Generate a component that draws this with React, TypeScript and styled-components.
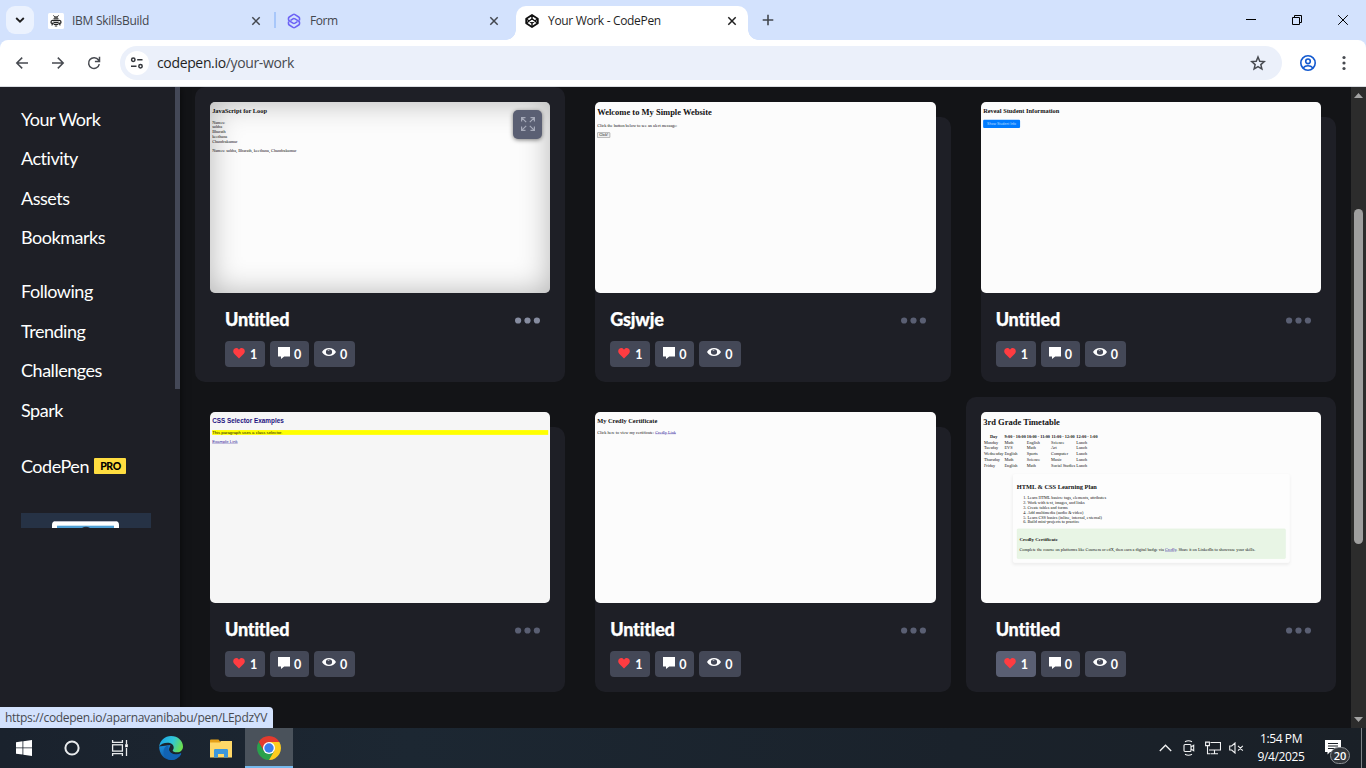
import React from "react";
import styled, { createGlobalStyle, css } from "styled-components";

const GlobalStyle = createGlobalStyle`
  html, body { margin: 0; padding: 0; background: #131417; }
  *, *::before, *::after { box-sizing: border-box; }
  svg { display: block; flex: none; }
`;

const uiFont = `"Open Sans", "Noto Sans", sans-serif`;
const siteFont = `Lato, "Liberation Sans", sans-serif`;

const Screen = styled.div`
  width: 1366px;
  height: 768px;
  overflow: hidden;
  display: flex;
  flex-direction: column;
  font-family: ${uiFont};
`;

/* ---------- browser frame ---------- */

const TabStrip = styled.div`
  height: 40px;
  flex: none;
  display: flex;
  align-items: stretch;
  background: #d3e2fd;
`;

const TabSearch = styled.div`
  width: 28px;
  height: 28px;
  margin: 6px 6px 0;
  border-radius: 9px;
  background: #ebf2fe;
  display: flex;
  align-items: center;
  justify-content: center;
`;

const Tab = styled.div<{ $width: number; $left: number; $right: number; $active?: boolean }>`
  position: relative;
  width: ${(p) => p.$width}px;
  margin-top: 6px;
  padding: 0 ${(p) => p.$right}px 5px ${(p) => p.$left}px;
  display: flex;
  align-items: center;
  gap: 8px;
  font-size: 12px;
  color: ${(p) => (p.$active ? "#1f1f1f" : "#43474e")};
  ${(p) =>
    p.$active &&
    css`
      background: #fff;
      border-radius: 10px 10px 0 0;
      &::before,
      &::after {
        content: "";
        position: absolute;
        bottom: 0;
        width: 10px;
        height: 10px;
      }
      &::before {
        left: -10px;
        background: radial-gradient(circle at 0 0, transparent 9.5px, #fff 10px);
      }
      &::after {
        right: -10px;
        background: radial-gradient(circle at 100% 0, transparent 9.5px, #fff 10px);
      }
    `}
`;

const TabTitle = styled.span<{ $spacing: number }>`
  flex: 1;
  white-space: nowrap;
  line-height: 16px;
  letter-spacing: ${(p) => p.$spacing}px;
`;

const TabDivider = styled.div`
  width: 2px;
  height: 16px;
  margin-top: 12px;
  background: #a8c7fa;
`;

const NewTab = styled.div`
  width: 40px;
  display: flex;
  align-items: center;
  justify-content: center;
`;

const WindowControls = styled.div`
  margin-left: auto;
  display: flex;
  align-items: center;
`;

const WindowControl = styled.div`
  width: 46px;
  display: flex;
  justify-content: center;
`;

const ToolbarBack = styled.div`
  flex: none;
  background: #d3e2fd;
`;

const Toolbar = styled.div`
  height: 47px;
  padding: 0 4px 1px;
  display: flex;
  align-items: center;
  background: #fff;
  border-radius: 8px 8px 0 0;
  border-bottom: 1px solid #dadde2;
`;

const ToolButton = styled.div`
  width: 36px;
  display: flex;
  justify-content: center;
`;

const AddressBar = styled.div`
  flex: 1;
  height: 34px;
  margin-left: 8px;
  margin-right: 8px;
  padding: 0 16px 0 5px;
  display: flex;
  align-items: center;
  gap: 8px;
  border-radius: 17px;
  background: #ebf0fa;
`;

const SiteInfo = styled.div`
  width: 24px;
  height: 24px;
  border-radius: 50%;
  background: #fff;
  display: flex;
  align-items: center;
  justify-content: center;
`;

const Address = styled.div`
  flex: 1;
  font-size: 14px;
  line-height: 20px;
  letter-spacing: -0.35px;
  color: #474a50;
  b {
    font-weight: 400;
    color: #1f1f1f;
  }
`;

/* ---------- page ---------- */

const Page = styled.div`
  position: relative;
  flex: 1;
  min-height: 0;
  display: flex;
  overflow: hidden;
  background: #131417;
`;

const Sidebar = styled.aside`
  width: 180px;
  flex: none;
  display: flex;
  justify-content: space-between;
  background: #1e1f26;
  box-shadow: 0 0 8px rgba(0, 0, 0, 0.6);
`;

const SidebarScroll = styled.div`
  height: 441px;
  padding: 12px 0 0 21px;
  overflow: hidden;
`;

const SidebarThumb = styled.div`
  width: 5px;
  height: 302px;
  background: #444857;
`;

const NavGroup = styled.nav<{ $gap: number }>`
  display: flex;
  flex-direction: column;
  margin-bottom: ${(p) => p.$gap}px;
`;

const NavLink = styled.a`
  height: 39.5px;
  font: 400 18px/40px ${siteFont};
  letter-spacing: -0.47px;
  color: #fff;
  display: flex;
  align-items: center;
  gap: 5.5px;
`;

const ProBadge = styled.span`
  width: 32px;
  height: 16px;
  margin-top: 1px;
  border-radius: 1px;
  background: #ffdd40;
  color: #000;
  font: 900 10.5px/16px ${siteFont};
  letter-spacing: -0.4px;
  text-align: center;
`;

const Promo = styled.div`
  width: 130px;
  height: 60px;
  background: #263245;
`;

const Grid = styled.main`
  flex: 1;
  min-width: 0;
  padding: 0 15px;
  display: grid;
  grid-template-columns: repeat(3, minmax(0, 1fr));
  grid-auto-rows: 295px;
  gap: 15px;
  align-content: start;
`;

const Card = styled.article<{ $raised?: boolean }>`
  position: relative;
  padding: 15px;
  font-family: ${siteFont};
  &::before {
    content: "";
    position: absolute;
    inset: ${(p) => (p.$raised ? "0" : "30px 0 0 15px")};
    border-radius: 10px;
    background: #1e1f26;
  }
`;

const Thumb = styled.div<{ $bg: string; $shaded?: boolean }>`
  position: relative;
  height: 191px;
  border-radius: 5px;
  overflow: hidden;
  background: ${(p) => p.$bg};
  ${(p) =>
    p.$shaded &&
    css`
      &::after {
        content: "";
        position: absolute;
        inset: 0;
        border-radius: 5px;
        box-shadow: inset 0 0 30px rgba(0, 0, 0, 0.29);
      }
    `}
`;

const MiniPage = styled.div<{ $font: string }>`
  display: flow-root;
  width: 1280px;
  height: 718px;
  padding: 0 8px;
  transform: scale(0.2659);
  transform-origin: 0 0;
  font: 16px ${(p) => p.$font};
  color: #111;
  a {
    color: #3a2aa0;
    text-decoration: underline;
  }
`;

const PlainButton = styled.button`
  width: 49px;
  height: 21px;
  padding: 0;
  font: 13.33px "Liberation Sans", sans-serif;
  border: 2px solid #808080;
  border-radius: 3px;
  background: #efefef;
  color: #000;
`;

const BlueButton = styled.button`
  padding: 8px 15px;
  font: 13.33px "Liberation Sans", sans-serif;
  border: 0;
  border-radius: 4px;
  background: #007bff;
  color: #b9dcff;
`;

const NavyHeading = styled.h2`
  color: #1d1280;
`;

const Marked = styled.p`
  background: #ff0;
`;

const PlanBox = styled.div`
  width: 1041px;
  margin: 19px auto 0;
  padding: 15px;
  background: #fdfdfd;
  border-radius: 8px;
  box-shadow: 0 7px 12px rgba(0, 0, 0, 0.06);
  display: flow-root;
`;

const GreenBox = styled.div`
  padding: 9px;
  display: flow-root;
  background: #e8f5e5;
  border: 1px solid #dcf0da;
  border-radius: 5px;
`;

const ExpandButton = styled.div`
  position: absolute;
  z-index: 1;
  top: 8px;
  right: 8.5px;
  width: 28.5px;
  height: 28.5px;
  border-radius: 5px;
  background: #5a5f73;
  box-shadow: 0 1px 4px rgba(0, 0, 0, 0.5);
  display: flex;
  align-items: center;
  justify-content: center;
`;

const Meta = styled.div`
  position: relative;
  padding: 15px;
`;

const TitleRow = styled.div`
  height: 22px;
  display: flex;
  justify-content: space-between;
  align-items: flex-start;
`;

const PenTitle = styled.h3`
  margin: 0;
  font: 900 18px/22px ${siteFont};
  letter-spacing: -0.2px;
  -webkit-text-stroke: 0.25px #fff;
  color: #fff;
`;

const DotsBox = styled.div<{ $bright?: boolean }>`
  margin: 9px -5px 0 0;
  color: ${(p) => (p.$bright ? "#868ca0" : "#5a5f73")};
`;

const Stats = styled.div`
  display: flex;
  gap: 5px;
  margin-top: 11px;
`;

const Stat = styled.div<{ $width: number; $gap: number; $lift?: number; $hover?: boolean }>`
  width: ${(p) => p.$width}px;
  height: 26px;
  padding-left: 8px;
  display: flex;
  align-items: center;
  gap: ${(p) => p.$gap}px;
  border-radius: 4px;
  background: ${(p) => (p.$hover ? "#5a5f73" : "#444857")};
  color: #fff;
  font: 700 12.5px/26px ${siteFont};
  svg {
    margin-bottom: ${(p) => p.$lift ?? 2}px;
  }
`;

const StatCount = styled.span`
  padding-top: 1px;
`;

const ScrollTrack = styled.div`
  width: 15px;
  flex: none;
  padding: 6px 3px;
  display: flex;
  flex-direction: column;
  align-items: center;
  background: #2c2c2c;
`;

const ScrollThumb = styled.div`
  width: 9px;
  height: 335px;
  margin-top: 111px;
  margin-bottom: auto;
  border-radius: 5px;
  background: #9f9f9f;
`;

const StatusBubble = styled.div`
  position: absolute;
  left: 0;
  bottom: 0;
  width: 273px;
  height: 21px;
  padding-left: 5px;
  border-radius: 0 4px 0 0;
  background: #d3e2fd;
  color: #474a50;
  font-size: 12px;
  line-height: 21px;
  letter-spacing: -0.31px;
  white-space: nowrap;
`;

/* ---------- taskbar ---------- */

const Taskbar = styled.footer`
  height: 40px;
  flex: none;
  display: flex;
  background: linear-gradient(90deg, #1a222d, #1c2732 30%, #1a222b 70%, #1a2027);
`;

const TaskItem = styled.div<{ $active?: boolean }>`
  width: 48px;
  display: flex;
  align-items: center;
  justify-content: center;
  ${(p) =>
    p.$active &&
    css`
      background: #4a525b;
      box-shadow: inset 0 -2px 0 #76b9ed;
    `}
`;

const TaskGroup = styled.div<{ $gap: number }>`
  display: flex;
  margin-right: ${(p) => p.$gap}px;
`;

const Tray = styled.div`
  margin-left: auto;
  display: flex;
  align-items: center;
`;

const TrayIcon = styled.div<{ $width: number }>`
  width: ${(p) => p.$width}px;
  display: flex;
  justify-content: center;
`;

const Clock = styled.div`
  width: 68px;
  text-align: center;
  color: #fff;
  font-size: 12px;
  line-height: 18px;
  letter-spacing: -0.4px;
`;

const Notifications = styled.div`
  position: relative;
  width: 46px;
  height: 40px;
  padding: 12px 0 0 10px;
`;

const NoticeCount = styled.span`
  position: absolute;
  left: 15px;
  top: 19px;
  width: 20px;
  height: 17px;
  border: 1px solid #8c9095;
  border-radius: 9px;
  background: #33373c;
  color: #fff;
  font-size: 11px;
  font-weight: 600;
  line-height: 15px;
  text-align: center;
`;

const DesktopEdge = styled.div`
  width: 5px;
  height: 40px;
  border-left: 1px solid #7d8287;
`;

/* ---------- icons ---------- */

const CloseIcon = ({ color = "#43474e" }: { color?: string }) => (
  <svg width="10" height="10" viewBox="0 0 10 10" stroke={color} strokeWidth="1.5">
    <path d="M1.3 1.3l7.4 7.4M8.7 1.3L1.3 8.7" />
  </svg>
);

const BeeIcon = () => (
  <svg width="16" height="16" viewBox="0 0 16 16">
    <rect width="16" height="16" rx="1.500" fill="#fff" />
    <g fill="none" stroke="#222">
      <path d="M5.300 2.500l1.500 1.200M10.700 2.500L9.200 3.700" strokeWidth="1" />
      <path d="M6 8C4.800 6.800 3 7.600 3 9.200c0 1.300 1.600 1.500 3 .6M10 8c1.200-1.200 3-.4 3 1.200 0 1.300-1.600 1.500-3 .6" strokeWidth="1.200" />
      <path d="M5.500 11.200H4v1.300M10.500 11.200H12v1.300" strokeWidth="1" />
      <path d="M5.500 5.900h5M6 7.700h4M6 9.500h4M6 11.300h4M6.800 13h2.400" strokeWidth="1.200" />
    </g>
    <path d="M6 4.800Q6 3.200 8 3.200t2 1.600z" fill="#222" />
  </svg>
);

const FormIcon = () => (
  <svg width="16" height="16" viewBox="0 0 16 16" fill="none" stroke="#6d63f5" strokeWidth="1.600" strokeLinejoin="round" strokeLinecap="round">
    <path d="M13.500 7V5.300c0-.6-.3-1-.8-1.300L9 1.600a1.900 1.900 0 0 0-2 0L3.300 4c-.5.300-.8.700-.8 1.300v1.200c0 .6.300 1 .8 1.300L7 10.200c.6.400 1.400.4 2 0l2-1.300" />
    <path d="M2.500 9v1.700c0 .6.300 1 .8 1.300L7 14.400c.6.400 1.400.4 2 0l3.700-2.400c.5-.3.800-.7.800-1.300V9.500c0-.6-.3-1-.8-1.300L9 5.800a1.900 1.900 0 0 0-2 0L5 7.100" />
  </svg>
);

const CodepenIcon = () => (
  <svg width="16" height="16" viewBox="0 0 16 16" fill="none" stroke="#111" strokeWidth="1.800" strokeLinejoin="round">
    <path d="M8 2l5.800 3.800v4.400L8 14l-5.800-3.800V5.800z" />
    <path d="M8 2v3.700M8 14v-3.700M2.200 5.800L8 10.300l5.800-4.500M2.200 10.200L8 5.700l5.800 4.500" strokeWidth="1.400" />
  </svg>
);

const BackIcon = ({ flip }: { flip?: boolean }) => (
  <svg width="14" height="14" viewBox="0 0 14 14" fill="none" stroke="#474a50" strokeWidth="1.500" transform={flip ? "scale(-1 1)" : undefined}>
    <path d="M13 7H2M7.200 1.600L1.800 7l5.400 5.400" />
  </svg>
);

const ReloadIcon = () => (
  <svg width="14" height="14" viewBox="0 0 14 14" fill="none" stroke="#474a50" strokeWidth="1.500">
    <path d="M12.300 8.200A5.400 5.400 0 1 1 11.500 4l.9 1M12.500.8v4.600H7.900" />
  </svg>
);

const TuneIcon = () => (
  <svg width="14" height="12" viewBox="0 0 14 12" fill="none" stroke="#33363b" strokeWidth="1.500">
    <circle cx="3.300" cy="2.800" r="1.700" />
    <path d="M7.200 2.800H12.500M1 9.200H6.500" />
    <circle cx="10.500" cy="9.200" r="1.700" />
  </svg>
);

const StarIcon = () => (
  <svg width="16" height="16" viewBox="0 0 16 16" fill="none" stroke="#474a50" strokeWidth="1.500">
    <path d="M8 2l1.750 4.200 4.550.4-3.450 3 1.050 4.450L8 11.700l-3.900 2.350 1.050-4.450-3.450-3 4.550-.4z" />
  </svg>
);

const ProfileIcon = () => (
  <svg width="18" height="18" viewBox="0 0 18 18" fill="none" stroke="#1259cf" strokeWidth="1.600">
    <circle cx="9" cy="9" r="7.200" />
    <circle cx="9" cy="7.300" r="2.300" />
    <path d="M4 14c1.400-1.500 3-2.200 5-2.200s3.600.7 5 2.200" />
  </svg>
);

const MoreIcon = () => (
  <svg width="4" height="16" viewBox="0 0 4 16" fill="#474a50">
    <circle cx="2" cy="2.500" r="1.600" />
    <circle cx="2" cy="8" r="1.600" />
    <circle cx="2" cy="13.500" r="1.600" />
  </svg>
);

const DotsIcon = () => (
  <svg width="25" height="7" viewBox="0 0 25 7" fill="currentColor">
    <circle cx="3.100" cy="3.500" r="3.100" />
    <circle cx="12.500" cy="3.500" r="3.100" />
    <circle cx="21.900" cy="3.500" r="3.100" />
  </svg>
);

const HeartIcon = () => (
  <svg width="12" height="11" viewBox="0 0 12 11">
    <path d="M6 10.600L1.200 5.700C-.3 4 0 1.800 1.300.8 2.800-.3 5-.1 6 1.700 7-.1 9.200-.3 10.700.8 12 1.800 12.300 4 10.800 5.700z" fill="#ff3c41" />
  </svg>
);

const CommentIcon = () => (
  <svg width="12" height="12" viewBox="0 0 12 12">
    <path d="M0 0h12v9.500H6.200L3 12V9.500H0z" fill="#fff" />
  </svg>
);

const EyeIcon = () => (
  <svg width="14" height="8" viewBox="0 0 14 9" preserveAspectRatio="none" fillRule="evenodd">
    <path d="M0 4.500C1.500 1.700 4 0 7 0s5.500 1.700 7 4.500C12.500 7.300 10 9 7 9S1.500 7.300 0 4.500zM7 1.400a3.100 3.100 0 1 0 0 6.200 3.100 3.100 0 0 0 0-6.200z" fill="#fff" />
    <path d="M5.200 2.300L7.600 2 7 3.200z" fill="#fff" />
  </svg>
);

const ExpandIcon = () => (
  <svg width="14" height="14" viewBox="0 0 14 14" fill="none" stroke="#a6aab9" strokeWidth="1.200">
    <path d="M.6 4.500V.6h3.900M.6.6l4.600 4.600M9.500.6h3.900v3.900M13.400.6L8.800 5.200M13.400 9.500v3.900H9.500M13.400 13.400L8.800 8.800M4.500 13.400H.6V9.500M.6 13.400l4.600-4.600" />
  </svg>
);

const PromoArt = () => (
  <svg width="130" height="60" viewBox="0 0 130 60">
    <rect x="31" y="8" width="67" height="60" rx="4" fill="#fff" />
    <path d="M33 8.500h63" stroke="#b9bcc8" />
    <rect x="36" y="12.700" width="57" height="50" fill="#4f9fd4" />
    <path d="M61 15q4-2.500 8 0z" fill="#263245" />
  </svg>
);

const WindowsIcon = () => (
  <svg width="16" height="16" viewBox="0 0 16 16" fill="#fff">
    <path d="M0 2.200L6.500 1.300v6.200H0zM7.300 1.200L16 0v7.500H7.300zM0 8.300h6.500v6.300L0 13.700zM7.300 8.300H16V16l-8.700-1.200z" />
  </svg>
);

const TaskViewIcon = () => (
  <svg width="18" height="16" viewBox="0 0 18 16" fill="none" stroke="#e9ebed" strokeWidth="1.300">
    <path d="M1.600 0v2.400h9.800V0M1.600 16v-2.400h9.800V16M15.500 0v4M15.500 8v8" />
    <rect x="1.600" y="4.800" width="9.800" height="6.300" />
    <rect x="14.200" y="4.200" width="2.600" height="3" fill="#fff" stroke="none" />
  </svg>
);

const EdgeIcon = () => (
  <svg width="24" height="24" viewBox="0 0 24 24">
    <defs>
      <linearGradient id="edgeTop" x1="0" y1="0.200" x2="1" y2="0.500">
        <stop offset="0" stopColor="#1ba4e8" />
        <stop offset="0.550" stopColor="#31c6d8" />
        <stop offset="1" stopColor="#6be04f" />
      </linearGradient>
      <linearGradient id="edgeLow" x1="0" y1="0" x2="0.600" y2="1">
        <stop offset="0" stopColor="#1d92e0" />
        <stop offset="1" stopColor="#0c4f9c" />
      </linearGradient>
    </defs>
    <path d="M.2 10.500C0 17 4.500 24 12 24c4.300 0 8-2.300 10-5.800.4-.8-.1-1-.7-.7-1.300.7-2.700 1-4.200 1-4 0-7.100-2.300-7.100-5.500L11.500 9z" fill="url(#edgeLow)" />
    <path d="M9.500 9C6 10 4.300 13 4.500 16.500 4.800 20.500 8 23.700 12 24c4.300 0 8-2.300 10-5.800.4-.8-.1-1-.7-.7-1.300.7-2.700 1-4.200 1C12.500 18.500 9 15.500 9.500 12z" fill="#1163b4" />
    <path d="M.2 10.500C1 4.500 6 0 12 0c7 0 12 5 12 10.500 0 3.500-2.500 5.800-6 5.800-2.600 0-4.300-.9-4.300-1.900 0-.7 1-1.200 1-3 0-2.500-2.700-4.600-6.200-4.600C4.800 6.800 1.500 8.400.2 10.500z" fill="url(#edgeTop)" />
  </svg>
);

const FolderIcon = () => (
  <svg width="22" height="19" viewBox="0 0 22 19">
    <path d="M0 1.500Q0 .5 1 .5h7.500l1.500 2H22V18H0z" fill="#e6a118" />
    <path d="M0 3.500h10l1-1.500h11v16.500H0z" fill="#ffd868" />
    <path d="M4 18.500v-7.200Q4 10 5.300 10h11.400q1.300 0 1.300 1.300v7.200h-4V15H8v3.500z" fill="#3c97dc" />
  </svg>
);

const ChromeIcon = () => (
  <svg width="24" height="24" viewBox="0 0 24 24">
    <path d="M12 6h10.390a12 12 0 0 0-20.780 0l5.200 9z" fill="#e33b2e" />
    <path d="M1.610 6A12 12 0 0 0 12 24l5.200-9-10.400 0z" fill="#2aa14c" />
    <path d="M22.390 6H12l5.200 9L12 24A12 12 0 0 0 22.390 6z" fill="#fdcc1e" />
    <circle cx="12" cy="12" r="6" fill="#fff" />
    <circle cx="12" cy="12" r="4.700" fill="#3b7ded" />
  </svg>
);

const CameraIcon = () => (
  <svg width="12" height="16" viewBox="0 0 12 16" fill="none" stroke="#f1f2f3" strokeWidth="1.100">
    <rect x="1" y="4.500" width="7" height="7" rx="1" />
    <path d="M8 7l2.700-1.700v5.400L8 9M2 1.700Q5.500-.1 9 1.700M2 14.300q3.500 1.800 7 0" />
  </svg>
);

const NetworkIcon = () => (
  <svg width="16" height="14" viewBox="0 0 16 14" fill="none" stroke="#f1f2f3" strokeWidth="1.100">
    <path d="M5.500 1.500h10v7.500H4M9.500 9v3.500M6 12.700h7M2.500 5v7.700h3" />
    <path d="M.6 1.100h3.800v3.500H.6z" />
  </svg>
);

const MuteIcon = () => (
  <svg width="15" height="12" viewBox="0 0 15 12" fill="none" stroke="#f1f2f3" strokeWidth="1.100">
    <path d="M.7 4v4h2L6 11V1L2.700 4zM9 3.800l4.800 4.800M13.800 3.800L9 8.600" />
  </svg>
);

/* ---------- pen previews ---------- */

const serif = `"Liberation Serif", serif`;

const LoopPreview = () => (
  <>
    <h2>JavaScript for Loop</h2>
    <div>Names:<br />subha<br />Bharath<br />keethana<br />Chandrakumar</div>
    <p>Names: subha, Bharath, keethana, Chandrakumar</p>
  </>
);

const WelcomePreview = () => (
  <>
    <h1>Welcome to My Simple Website</h1>
    <p>Click the button below to see an alert message:</p>
    <PlainButton>Click!</PlainButton>
  </>
);

const StudentPreview = () => (
  <>
    <h2>Reveal Student Information</h2>
    <BlueButton>Show Student Info</BlueButton>
  </>
);

const SelectorPreview = () => (
  <>
    <NavyHeading>CSS Selector Examples</NavyHeading>
    <Marked>This paragraph uses a class selector.</Marked>
    <a>Example Link</a>
  </>
);

const CredlyPreview = () => (
  <>
    <h2>My Credly Certificate</h2>
    <p>Click here to view my certificate: <a>Credly Link</a></p>
  </>
);

const timetable = [
  ["Monday", "Math", "English", "Science", "Lunch"],
  ["Tuesday", "EVS", "Math", "Art", "Lunch"],
  ["Wednesday", "English", "Sports", "Computer", "Lunch"],
  ["Thursday", "Math", "Science", "Music", "Lunch"],
  ["Friday", "English", "Math", "Social Studies", "Lunch"],
];

const TimetablePreview = () => (
  <>
    <h1>3rd Grade Timetable</h1>
    <table>
      <thead>
        <tr>
          {["Day", "9:00 - 10:00", "10:00 - 11:00", "11:00 - 12:00", "12:00 - 1:00"].map((h) => (
            <th key={h}>{h}</th>
          ))}
        </tr>
      </thead>
      <tbody>
        {timetable.map((row) => (
          <tr key={row[0]}>
            {row.map((cell, i) => (
              <td key={i}>{cell}</td>
            ))}
          </tr>
        ))}
      </tbody>
    </table>
    <PlanBox>
      <h2>HTML &amp; CSS Learning Plan</h2>
      <ol>
        <li>Learn HTML basics: tags, elements, attributes</li>
        <li>Work with text, images, and links</li>
        <li>Create tables and forms</li>
        <li>Add multimedia (audio &amp; video)</li>
        <li>Learn CSS basics (inline, internal, external)</li>
        <li>Build mini-projects to practice</li>
      </ol>
      <GreenBox>
        <h3>Credly Certificate</h3>
        <p>
          Complete the course on platforms like Coursera or edX, then earn a digital badge via <a>Credly</a>. Share it on
          LinkedIn to showcase your skills.
        </p>
      </GreenBox>
    </PlanBox>
  </>
);

interface Pen {
  title: string;
  preview: React.ReactNode;
  bg?: string;
  font?: string;
  raised?: boolean;
  hovered?: boolean;
  heartHover?: boolean;
}

const pens: Pen[] = [
  { title: "Untitled", preview: <LoopPreview />, raised: true, hovered: true },
  { title: "Gsjwje", preview: <WelcomePreview /> },
  { title: "Untitled", preview: <StudentPreview /> },
  { title: "Untitled", preview: <SelectorPreview />, bg: "#f6f6f6", font: `"Liberation Sans", sans-serif` },
  { title: "Untitled", preview: <CredlyPreview /> },
  { title: "Untitled", preview: <TimetablePreview />, raised: true, heartHover: true },
];

const PenCard = ({ pen }: { pen: Pen }) => (
  <Card $raised={pen.raised}>
    <Thumb $bg={pen.bg ?? "#fcfcfc"} $shaded={pen.hovered}>
      <MiniPage $font={pen.font ?? serif}>{pen.preview}</MiniPage>
      {pen.hovered && (
        <ExpandButton>
          <ExpandIcon />
        </ExpandButton>
      )}
    </Thumb>
    <Meta>
      <TitleRow>
        <PenTitle>{pen.title}</PenTitle>
        <DotsBox $bright={pen.hovered}>
          <DotsIcon />
        </DotsBox>
      </TitleRow>
      <Stats>
        <Stat $width={40} $gap={5} $hover={pen.heartHover}>
          <HeartIcon />
          <StatCount>1</StatCount>
        </Stat>
        <Stat $width={39} $gap={4}>
          <CommentIcon />
          <StatCount>0</StatCount>
        </Stat>
        <Stat $width={41.3} $gap={4} $lift={4}>
          <EyeIcon />
          <StatCount>0</StatCount>
        </Stat>
      </Stats>
    </Meta>
  </Card>
);

export default function App() {
  return (
    <Screen>
      <GlobalStyle />
      <TabStrip>
        <TabSearch>
          <svg width="10" height="6" viewBox="0 0 10 6" fill="none" stroke="#1f1f1f" strokeWidth="1.800">
            <path d="M1.200 1L5 4.700 8.800 1" />
          </svg>
        </TabSearch>
        <Tab $width={234} $left={8} $right={13}>
          <BeeIcon />
          <TabTitle $spacing={-0.28}>IBM SkillsBuild</TabTitle>
          <CloseIcon />
        </Tab>
        <TabDivider />
        <Tab $width={240} $left={10} $right={17}>
          <FormIcon />
          <TabTitle $spacing={-0.4}>Form</TabTitle>
          <CloseIcon />
        </Tab>
        <Tab $width={232} $left={8} $right={11} $active>
          <CodepenIcon />
          <TabTitle $spacing={-0.33}>Your Work - CodePen</TabTitle>
          <CloseIcon color="#1f1f1f" />
        </Tab>
        <NewTab>
          <svg width="12" height="12" viewBox="0 0 12 12" stroke="#43474e" strokeWidth="1.600">
            <path d="M6 .7v10.600M.7 6h10.600" />
          </svg>
        </NewTab>
        <WindowControls>
          <WindowControl>
            <svg width="10" height="10" viewBox="0 0 10 10" stroke="#000">
              <path d="M0 4.500h10" />
            </svg>
          </WindowControl>
          <WindowControl>
            <svg width="10" height="10" viewBox="0 0 10 10" fill="none" stroke="#000">
              <path d="M.5 2.500h7v7h-7zM2.500 2.500v-2h7v7h-2" />
            </svg>
          </WindowControl>
          <WindowControl>
            <svg width="10" height="10" viewBox="0 0 10 10" stroke="#000">
              <path d="M.2.2l9.600 9.600M9.800.2L.2 9.800" />
            </svg>
          </WindowControl>
        </WindowControls>
      </TabStrip>

      <ToolbarBack>
        <Toolbar>
          <ToolButton>
            <BackIcon />
          </ToolButton>
          <ToolButton>
            <BackIcon flip />
          </ToolButton>
          <ToolButton>
            <ReloadIcon />
          </ToolButton>
          <AddressBar>
            <SiteInfo>
              <TuneIcon />
            </SiteInfo>
            <Address>
              <b>codepen.io</b>/your-work
            </Address>
            <StarIcon />
          </AddressBar>
          <ToolButton>
            <ProfileIcon />
          </ToolButton>
          <ToolButton>
            <MoreIcon />
          </ToolButton>
        </Toolbar>
      </ToolbarBack>

      <Page>
        <Sidebar>
          <SidebarScroll>
            <NavGroup $gap={14.4}>
              {["Your Work", "Activity", "Assets", "Bookmarks"].map((t) => (
                <NavLink key={t}>{t}</NavLink>
              ))}
            </NavGroup>
            <NavGroup $gap={16.6}>
              {["Following", "Trending", "Challenges", "Spark"].map((t) => (
                <NavLink key={t}>{t}</NavLink>
              ))}
            </NavGroup>
            <NavGroup $gap={28}>
              <NavLink>
                CodePen <ProBadge>PRO</ProBadge>
              </NavLink>
            </NavGroup>
            <Promo>
              <PromoArt />
            </Promo>
          </SidebarScroll>
          <SidebarThumb />
        </Sidebar>
        <Grid>
          {pens.map((pen, i) => (
            <PenCard key={i} pen={pen} />
          ))}
        </Grid>
        <ScrollTrack>
          <svg width="9" height="5" viewBox="0 0 9 5" fill="#a3a3a3">
            <path d="M4.500 0L9 5H0z" />
          </svg>
          <ScrollThumb />
          <svg width="9" height="5" viewBox="0 0 9 5" fill="#a3a3a3">
            <path d="M4.500 5L0 0h9z" />
          </svg>
        </ScrollTrack>
        <StatusBubble>https://codepen.io/aparnavanibabu/pen/LEpdzYV</StatusBubble>
      </Page>

      <Taskbar>
        <TaskGroup $gap={3}>
          <TaskItem>
            <WindowsIcon />
          </TaskItem>
          <TaskItem>
            <svg width="16" height="16" viewBox="0 0 16 16" fill="none" stroke="#e9ebed" strokeWidth="2">
              <circle cx="8" cy="8" r="6.600" />
            </svg>
          </TaskItem>
          <TaskItem>
            <TaskViewIcon />
          </TaskItem>
        </TaskGroup>
        <TaskGroup $gap={2}>
          <TaskItem>
            <EdgeIcon />
          </TaskItem>
        </TaskGroup>
        <TaskItem>
          <FolderIcon />
        </TaskItem>
        <TaskItem $active>
          <ChromeIcon />
        </TaskItem>
        <Tray>
          <TrayIcon $width={24}>
            <svg width="13" height="8" viewBox="0 0 13 8" fill="none" stroke="#f1f2f3" strokeWidth="1.300">
              <path d="M.8 7L6.500 1.200 12.200 7" />
            </svg>
          </TrayIcon>
          <TrayIcon $width={24}>
            <CameraIcon />
          </TrayIcon>
          <TrayIcon $width={24}>
            <NetworkIcon />
          </TrayIcon>
          <TrayIcon $width={22}>
            <MuteIcon />
          </TrayIcon>
          <Clock>
            1:54 PM
            <br />
            9/4/2025
          </Clock>
          <Notifications>
            <svg width="16" height="15" viewBox="0 0 16 15">
              <path d="M0 0h16v12H5l-2.500 2.500V12H0z" fill="#fff" />
              <path d="M3 3.500h10M3 6h10M3 8.500h7" stroke="#1a2027" />
            </svg>
            <NoticeCount>20</NoticeCount>
          </Notifications>
          <DesktopEdge />
        </Tray>
      </Taskbar>
    </Screen>
  );
}
